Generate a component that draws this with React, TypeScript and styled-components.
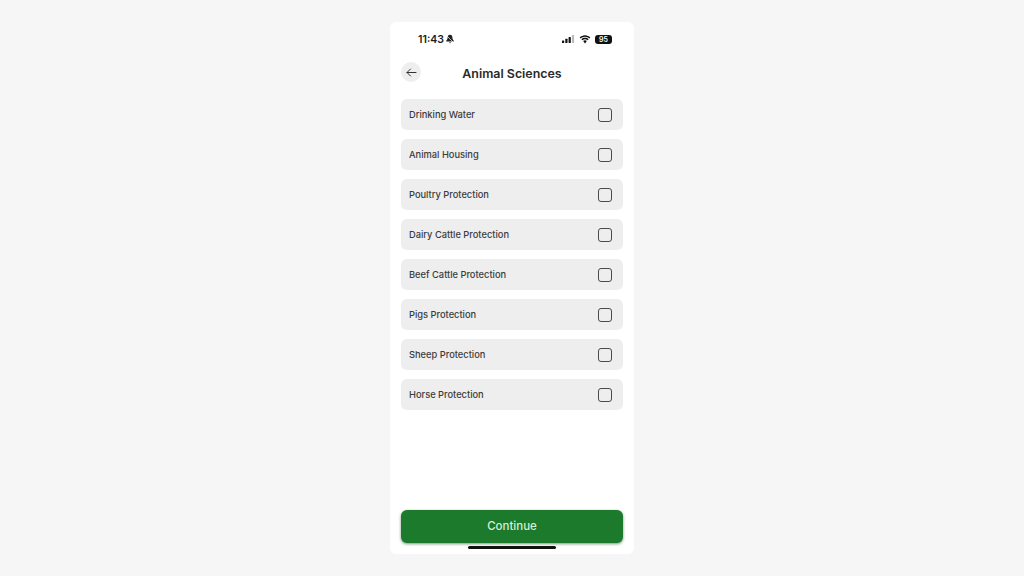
import { createGlobalStyle } from "styled-components";
import styled from "styled-components";

const topics = [
  "Drinking Water",
  "Animal Housing",
  "Poultry Protection",
  "Dairy Cattle Protection",
  "Beef Cattle Protection",
  "Pigs Protection",
  "Sheep Protection",
  "Horse Protection",
];

function App() {
  return (
    <Page>
      <GlobalStyle />
      <Phone>
        <StatusBar>
          <Clock>
            11:43
            <svg width="10" height="10" viewBox="0 0 10 10">
              <path d="M5 .8C3.400.8 2.600 2 2.600 3.600c0 1.800-.9 2.600-1.400 3.200v.7h7.600v-.7c-.5-.6-1.400-1.400-1.400-3.200C7.400 2 6.600.8 5 .8z" fill="#222" />
              <path d="M4 8.200h2L5 9.500z" fill="#222" />
              <path d="M1.500 1.500l7 7" stroke="#fff" strokeWidth="0.7" />
            </svg>
          </Clock>
          <StatusIcons>
            <svg width="13" height="8" viewBox="0 0 13 8">
              <rect x="0" y="5.500" width="2.200" height="2.500" rx="0.500" fill="#111" />
              <rect x="3.300" y="3.800" width="2.200" height="4.200" rx="0.500" fill="#111" />
              <rect x="6.600" y="2" width="2.200" height="6" rx="0.500" fill="#111" />
              <rect x="9.900" y="0" width="2.200" height="8" rx="0.500" fill="#bbb" />
            </svg>
            <svg width="12" height="9" viewBox="0 0 12 9">
              <path d="M6 1.800c1.700 0 3.200.7 4.300 1.800l1-1C10 1.200 8.100.3 6 .3S2 1.200.7 2.600l1 1C2.800 2.500 4.300 1.800 6 1.800z" fill="#111" />
              <path d="M6 4.200c1 0 1.900.4 2.600 1l1-1C8.600 3.300 7.400 2.800 6 2.800s-2.600.5-3.600 1.400l1 1c.7-.6 1.600-1 2.600-1z" fill="#111" />
              <path d="M6 5.300c-.7 0-1.300.3-1.800.7L6 8.500 7.800 6c-.5-.4-1.100-.7-1.800-.7z" fill="#111" />
            </svg>
            <Battery>95</Battery>
          </StatusIcons>
        </StatusBar>
        <Header>
          <BackButton>
            <svg width="11" height="9" viewBox="0 0 11 9" fill="none" stroke="#333" strokeWidth="1" strokeLinecap="round" strokeLinejoin="round">
              <path d="M10 4.500H1M4.500 1L1 4.500 4.500 8" />
            </svg>
          </BackButton>
          <Title>Animal Sciences</Title>
        </Header>
        <List>
          {topics.map((topic) => (
            <Row key={topic}>
              <RowLabel>{topic}</RowLabel>
              <CheckBox />
            </Row>
          ))}
        </List>
        <Footer>
          <ContinueButton>Continue</ContinueButton>
          <HomeBar />
        </Footer>
      </Phone>
    </Page>
  );
}

export default App;

const GlobalStyle = createGlobalStyle`
  html, body {
    margin: 0;
    padding: 0;
    background: #f6f6f6;
    font-family: Inter, "Liberation Sans", sans-serif;
  }
`;

const Page = styled.div`
  width: 1024px;
  height: 576px;
  padding-top: 22px;
  box-sizing: border-box;
  display: flex;
  justify-content: center;
  overflow: hidden;
`;

const Phone = styled.div`
  width: 244px;
  height: 532px;
  background: #ffffff;
  border-radius: 6px;
  display: flex;
  flex-direction: column;
  box-sizing: border-box;
  padding: 0 11px;
`;

const StatusBar = styled.div`
  height: 34px;
  padding: 0 11px 0 17px;
  display: flex;
  align-items: center;
  justify-content: space-between;
`;

const Clock = styled.div`
  display: flex;
  align-items: center;
  gap: 1px;
  font-size: 10.5px;
  font-weight: 600;
  color: #1c1c1c;
`;

const StatusIcons = styled.div`
  display: flex;
  align-items: center;
  gap: 4px;
`;

const Battery = styled.div`
  width: 17px;
  height: 9px;
  border-radius: 3px;
  background: #111111;
  color: #ffffff;
  font-size: 7px;
  font-weight: 600;
  line-height: 9px;
  text-align: center;
`;

const Header = styled.div`
  position: relative;
  height: 32px;
  padding-top: 2px;
  box-sizing: border-box;
  display: flex;
  align-items: center;
  justify-content: center;
`;

const BackButton = styled.div`
  position: absolute;
  left: 0;
  top: 6px;
  width: 20px;
  height: 20px;
  border-radius: 50%;
  background: #eeeeee;
  display: flex;
  align-items: center;
  justify-content: center;
`;

const Title = styled.div`
  font-size: 12.4px;
  font-weight: 600;
  color: #2a2a2a;
`;

const List = styled.div`
  margin-top: 11px;
  display: flex;
  flex-direction: column;
  gap: 9px;
`;

const Row = styled.div`
  height: 31px;
  background: #eeeeee;
  border-radius: 6px;
  padding: 0 11px 0 8px;
  display: flex;
  align-items: center;
  justify-content: space-between;
`;

const RowLabel = styled.div`
  font-size: 9.3px;
  font-weight: 500;
  color: #3c3c3c;
`;

const CheckBox = styled.div`
  width: 14px;
  height: 14px;
  box-sizing: border-box;
  border: 1.6px solid #4a4a4a;
  border-radius: 3px;
`;

const Footer = styled.div`
  margin-top: auto;
  display: flex;
  flex-direction: column;
  align-items: center;
`;

const ContinueButton = styled.div`
  width: 100%;
  height: 33px;
  padding-bottom: 1px;
  box-sizing: border-box;
  background: #1b7a2b;
  border-radius: 6px;
  box-shadow: 0 1px 3px rgba(0, 60, 10, 0.55);
  color: #d8efd9;
  font-size: 11.5px;
  font-weight: 500;
  display: flex;
  align-items: center;
  justify-content: center;
`;

const HomeBar = styled.div`
  width: 88px;
  height: 3px;
  margin: 3px 0 5px;
  border-radius: 2px;
  background: #111111;
`;
